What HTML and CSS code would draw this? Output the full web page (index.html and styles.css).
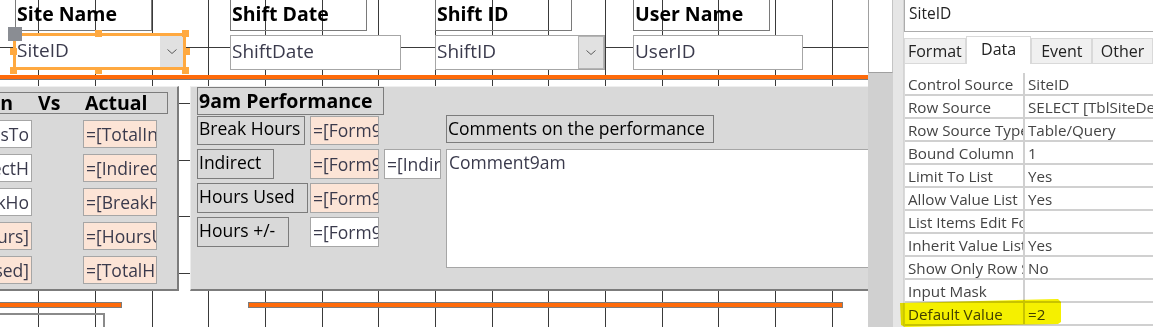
FILE: index.html
```html
<!DOCTYPE html>
<html>
<head>
<meta charset="utf-8">
<link rel="stylesheet" href="styles.css">
</head>
<body>
<div class="app">
  <div class="canvas">
    <svg class="grid" width="868" height="327" viewBox="0 0 868 327">
      <path d="M38.5 0V327M95.5 0V327M152.5 0V327M208.5 0V327M265.5 0V327M322.5 0V327M378.5 0V327M435.5 0V327M492.5 0V327M548.5 0V327M605.5 0V327M662.5 0V327M718.5 0V327M775.5 0V327M832.5 0V327M0 47.5H868M0 103.5H868M0 160.5H868M0 216.5H868M0 273.5H868" stroke="#3a3a3a" stroke-width="1" fill="none"/>
    </svg>

    <div class="hdr">
      <div class="hcol">
        <div class="lbl-top">Site Name</div>
        <div class="tb sel">
          <span class="tb-text">SiteID</span>
          <span class="dd"><svg width="10" height="5" viewBox="0 0 10 5"><path d="M0.5 0.5L5 4.5L9.5 0.5" stroke="#5a5a5a" fill="none"/></svg></span>
          <span class="hdl mv"></span>
          <span class="hdl tm"></span>
          <span class="hdl tr"></span>
          <span class="hdl ml"></span>
          <span class="hdl mr"></span>
          <span class="hdl bl"></span>
          <span class="hdl bm"></span>
          <span class="hdl br"></span>
        </div>
      </div>
      <div class="hcol">
        <div class="lbl-top">Shift Date</div>
        <div class="tb">
          <span class="tb-text">ShiftDate</span>
        </div>
      </div>
      <div class="hcol">
        <div class="lbl-top">Shift ID</div>
        <div class="tb tb-n">
          <span class="tb-text">ShiftID</span>
          <span class="dd dd-b"><svg width="10" height="5" viewBox="0 0 10 5"><path d="M0.5 0.5L5 4.5L9.5 0.5" stroke="#5a5a5a" fill="none"/></svg></span>
        </div>
      </div>
      <div class="hcol">
        <div class="lbl-top">User Name</div>
        <div class="tb tb-n">
          <span class="tb-text">UserID</span>
        </div>
      </div>
    </div>

    <div class="sep"></div>

    <div class="detail">
      <div class="panel pl">
        <div class="plh">
          <span class="h-n">n</span>
          <span class="h-vs">Vs</span>
          <span class="h-act">Actual</span>
        </div>
        <div class="plg">
          <div class="f fl">sTo</div>
          <div class="f fr peach">=[TotalIndirect]</div>
          <div class="f fl">ectH</div>
          <div class="f fr peach">=[IndirectHours]</div>
          <div class="f fl">kHo</div>
          <div class="f fr peach">=[BreakHours]</div>
          <div class="f fl peach">urs]</div>
          <div class="f fr peach">=[HoursUsed]</div>
          <div class="f fl peach">sed]</div>
          <div class="f fr peach">=[TotalHours]</div>
        </div>
      </div>

      <div class="panel pm">
        <div class="hd9">9am Performance</div>

        <div class="lb lb-bh">Break Hours</div>
        <div class="f fm fm-1 peach">=[Form9am]</div>
        <div class="lb cl">Comments on the performance</div>

        <div class="lb lb-ind">Indirect</div>
        <div class="f fm peach">=[Form9am]</div>
        <div class="f fi">=[Indirect]</div>
        <div class="f cb">Comment9am</div>

        <div class="lb lb-hu">Hours Used</div>
        <div class="f fm peach">=[Form9am]</div>

        <div class="lb lb-hpm">Hours +/-</div>
        <div class="f fm">=[Form9am]</div>
      </div>
    </div>

    <div class="foot">
      <div class="bars">
        <div class="bar bar1"></div>
        <div class="bar bar2"></div>
      </div>
      <div class="fbox"></div>
    </div>
  </div>

  <div class="vbar"><div class="vbar-top"></div></div>
  <div class="split"></div>

  <div class="props">
    <div class="pname">SiteID</div>
    <div class="tabs">
      <div class="tab t-format">Format</div>
      <div class="tab t-data">Data</div>
      <div class="tab t-event">Event</div>
      <div class="tab t-other">Other</div>
    </div>
    <div class="prows">
      <div class="prow"><div class="pk">Control Source</div><div class="pv">SiteID</div></div>
      <div class="prow"><div class="pk">Row Source</div><div class="pv">SELECT [TblSiteDetails].[SiteID]</div></div>
      <div class="prow"><div class="pk">Row Source Type</div><div class="pv">Table/Query</div></div>
      <div class="prow"><div class="pk">Bound Column</div><div class="pv">1</div></div>
      <div class="prow"><div class="pk">Limit To List</div><div class="pv">Yes</div></div>
      <div class="prow"><div class="pk">Allow Value List</div><div class="pv">Yes</div></div>
      <div class="prow"><div class="pk">List Items Edit Form</div><div class="pv"></div></div>
      <div class="prow"><div class="pk">Inherit Value List</div><div class="pv">Yes</div></div>
      <div class="prow"><div class="pk">Show Only Row Source Values</div><div class="pv">No</div></div>
      <div class="prow"><div class="pk">Input Mask</div><div class="pv"></div></div>
      <div class="prow"><div class="pk">Default Value</div><div class="pv">=2</div></div>
    </div>
  </div>

  <svg class="hilite" width="166" height="30" viewBox="0 0 166 30">
    <path d="M2 6L160 2L163 5L163 25L160 27L7 30L3 28Z" fill="#f5f000"/>
  </svg>
</div>
</body>
</html>
```

FILE: styles.css
```css
* { box-sizing: border-box; margin: 0; padding: 0; }

body {
  margin: 0;
  width: 1153px;
  height: 327px;
  overflow: hidden;
  background: #fff;
  font-family: "Open Sans", "Noto Sans", sans-serif;
}

.app {
  position: relative;
  display: flex;
  height: 327px;
}

/* ---------- design canvas ---------- */
.canvas {
  position: relative;
  flex: 0 0 868px;
  height: 327px;
  overflow: hidden;
  background: #fff;
}

.grid {
  position: absolute;
  left: 0;
  top: 0;
}

.hdr {
  position: relative;
  display: grid;
  grid-template-columns: 215px 205px 198px 1fr;
  padding-left: 15px;
  margin-top: -2px;
  height: 77px;
}

.hcol {
  display: flex;
  flex-direction: column;
  gap: 4px;
}

.lbl-top {
  width: 137px;
  height: 33px;
  border: 1px solid #7a7a7a;
  display: flex;
  align-items: center;
  padding: 0 0 3px 1px;
  font-weight: 700;
  font-size: 19.5px;
  color: #000;
  white-space: nowrap;
}

.tb {
  position: relative;
  width: 171px;
  height: 35px;
  border: 1px solid #a6a6a6;
  background: #fff;
  display: flex;
  align-items: center;
  font-size: 19px;
  color: #3a3a4c;
}

.tb-n { width: 170px; }

.tb-text {
  padding: 0 0 3px 1px;
  white-space: nowrap;
}

.tb.sel {
  width: 173px;
  height: 37px;
  margin: -2px 0 0 -2px;
  border: 3px solid #ffa940;
}

.dd {
  margin-left: auto;
  width: 23px;
  align-self: stretch;
  background: #e1e1e1;
  display: flex;
  align-items: center;
  justify-content: center;
}

.dd-b {
  width: 26px;
  border: 1px solid #b4b4b4;
}

.hdl {
  position: absolute;
  width: 7px;
  height: 7px;
  background: #ffa940;
}
.hdl.mv { left: -8px; top: -9px; width: 14px; height: 14px; background: #8a8d93; }
.hdl.tm { left: 79px; top: -6px; }
.hdl.tr { left: 166px; top: -6px; }
.hdl.ml { left: -6px; top: 12px; }
.hdl.mr { left: 167px; top: 12px; }
.hdl.bl { left: -6px; top: 31px; }
.hdl.bm { left: 79px; top: 31px; }
.hdl.br { left: 166px; top: 31px; }

.sep {
  position: relative;
  height: 5px;
  background: #fe6a0a;
  border-bottom: 1px solid #7a7a7a;
}

/* ---------- detail panels ---------- */
.detail {
  position: relative;
  display: flex;
  gap: 11px;
  margin-top: 6px;
  height: 205px;
}

.panel {
  height: 205px;
  background: #d9d9d9;
  border-top: 1px solid #efefef;
  border-bottom: 2px solid #7c7c7c;
}

.pl {
  flex: 0 0 209px;
  margin-left: -30px;
  border-right: 2px solid #7c7c7c;
  padding: 5px 0 0 5px;
}

.plh {
  width: 193px;
  height: 22px;
  border: 1px solid #7c7c7c;
  display: flex;
  align-items: center;
  padding-bottom: 1px;
  font-weight: 700;
  font-size: 19.5px;
  color: #000;
}

.h-n { width: 37px; text-align: right; }
.h-vs { width: 47px; margin-left: 25px; }

.plg {
  display: grid;
  grid-template-columns: 57px 51px 74px;
  grid-auto-rows: 28px;
  row-gap: 6px;
  margin-top: 6px;
}

.f {
  border: 1px solid #a6a6a6;
  background: #fff;
  font-size: 17.5px;
  color: #3a3a4c;
  white-space: nowrap;
  overflow: hidden;
  display: flex;
  align-items: center;
  padding: 0 0 1px 2px;
}

.f.peach { background: #fce4d6; }

.fl {
  grid-column: 1;
  justify-content: flex-end;
  padding-right: 2px;
}

.fr { grid-column: 3; }

.pm {
  flex: 0 0 700px;
  border-left: 1px solid #ececec;
  padding-left: 6px;
  display: grid;
  grid-template-columns: 113px 74px 62px 1fr;
  grid-template-rows: 29px 33px 34px 34px 30px;
  align-items: start;
}

.hd9 {
  grid-column: 1 / 3;
  width: 187px;
  height: 28px;
  border: 1px solid #7c7c7c;
  display: flex;
  align-items: center;
  padding: 0 0 2px 1px;
  font-weight: 700;
  font-size: 19.5px;
  color: #000;
  white-space: nowrap;
}

.lb {
  grid-column: 1;
  height: 30px;
  border: 1px solid #7c7c7c;
  display: flex;
  align-items: center;
  padding: 0 0 5px 1px;
  font-size: 17.5px;
  color: #000;
  white-space: nowrap;
}

.lb-bh { width: 108px; height: 29px; }
.lb-ind { width: 77px; }
.lb-hu { width: 111px; }
.lb-hpm { width: 92px; }

.fm {
  grid-column: 2;
  width: 69px;
  height: 30px;
}
.fm-1 { height: 29px; }

.fi {
  grid-column: 3;
  width: 57px;
  height: 30px;
}

.cl {
  grid-column: 4;
  grid-row: 2;
  width: 268px;
  height: 28px;
  margin-top: -1px;
  padding-bottom: 2px;
}

.cb {
  grid-column: 4;
  grid-row: 3 / span 3;
  width: 440px;
  height: 119px;
  align-items: flex-start;
  padding: 0 0 0 2px;
  line-height: 25px;
}

/* ---------- footer lines ---------- */
.foot {
  position: relative;
  margin-top: 11px;
}

.bars { display: flex; }

.bar {
  height: 6px;
  background: #fe6a0a;
  border: 1px solid #7c7c7c;
}
.bar1 { margin-left: -5px; width: 127px; }
.bar2 { margin-left: 126px; width: 595px; }

.fbox {
  margin-left: -5px;
  margin-top: 5px;
  width: 110px;
  height: 30px;
  border-top: 2px solid #8a8a8a;
  border-right: 2px solid #8a8a8a;
}

/* ---------- right gutter ---------- */
.vbar {
  flex: 0 0 25px;
  background: #d0d0d0;
}

.vbar-top {
  height: 73px;
  background: #fff;
  border-left: 1px solid #a0a0a0;
  border-right: 1px solid #c4c4c4;
  border-bottom: 1px solid #a0a0a0;
}

.split {
  flex: 0 0 10px;
  background: #e6e6e6;
}

/* ---------- property sheet ---------- */
.props {
  flex: 1;
  display: flex;
  flex-direction: column;
  background: #fff;
  border-left: 1px solid #d4d4d4;
  overflow: hidden;
}

.pname {
  height: 32px;
  border: 1px solid #acacac;
  border-top: none;
  border-right: none;
  padding: 2px 0 0 4px;
  font-size: 15.5px;
  color: #222;
}

.tabs {
  display: flex;
  align-items: flex-end;
  height: 28px;
  margin-top: 4px;
}

.tab {
  height: 26px;
  background: #f0f0f0;
  border: 1px solid #d9d9d9;
  display: flex;
  align-items: center;
  justify-content: center;
  font-size: 16px;
  color: #222;
}

.t-format { width: 62px; }
.t-data {
  width: 66px;
  height: 28px;
  background: #fff;
  border-bottom: none;
  align-items: flex-start;
  padding-top: 1px;
}
.t-event { width: 61px; }
.t-other { width: 61px; }

.prows {
  flex: 1;
  border-left: 1px solid #dadada;
  padding-top: 9px;
}

.prow {
  display: flex;
  height: 23px;
  border-bottom: 2px solid #d0d0d0;
  font-size: 15.2px;
  color: #444;
}

.pk {
  flex: 0 0 120px;
  border-right: 2px solid #d0d0d0;
  padding-left: 3px;
  white-space: nowrap;
  overflow: hidden;
  display: flex;
  align-items: center;
}

.pv {
  flex: 1;
  padding-left: 3px;
  white-space: nowrap;
  overflow: hidden;
  display: flex;
  align-items: center;
}

.hilite {
  position: absolute;
  left: 898px;
  top: 297px;
  mix-blend-mode: multiply;
}
```
